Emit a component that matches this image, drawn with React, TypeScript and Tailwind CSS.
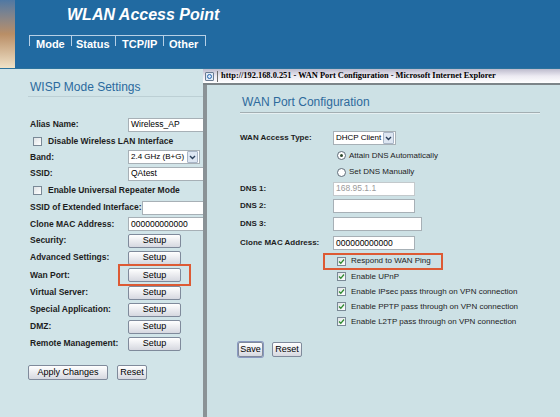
import type { ReactNode } from 'react'

const sans = "font-['Liberation_Sans',Arial,sans-serif]"

function Btn({ children, className = '' }: { children: ReactNode; className?: string }) {
  return (
    <div
      className={`flex h-[14px] items-center justify-center rounded-[2px] border border-[#7f8a9b] bg-gradient-to-b from-white to-[#d6d8e0] text-[9px] leading-none text-black ${className}`}
    >
      {children}
    </div>
  )
}

function Field({ value = '', className = '', muted = false }: { value?: string; className?: string; muted?: boolean }) {
  return (
    <div
      className={`flex h-[14px] shrink-0 items-center border border-[#a7b0b6] bg-white px-[2px] text-[8.5px] leading-none ${muted ? 'text-[#9a9a9a]' : 'text-black'} ${className}`}
    >
      {value}
    </div>
  )
}

function Check({ checked = false }: { checked?: boolean }) {
  return (
    <div className="flex h-[9px] w-[9px] shrink-0 items-center justify-center border border-[#7a8996] bg-gradient-to-br from-[#dfe3e6] to-white">
      {checked && (
        <svg width="7" height="7" viewBox="0 0 7 7">
          <path d="M1 3.5 L2.8 5.3 L6 1.5" fill="none" stroke="#2d8a2d" strokeWidth="1.3" />
        </svg>
      )}
    </div>
  )
}

function Radio({ on = false }: { on?: boolean }) {
  return (
    <div className="flex h-[9px] w-[9px] shrink-0 items-center justify-center rounded-full border border-[#5d6b78] bg-white">
      {on && <div className="h-[3px] w-[3px] rounded-full bg-[#2e4a2e]" />}
    </div>
  )
}

function Select({ value, className = '' }: { value: string; className?: string }) {
  return (
    <div
      className={`flex h-[14px] shrink-0 items-center justify-between overflow-hidden border border-[#a7b0b6] bg-white pl-[2px] pr-px text-[8px] leading-none whitespace-nowrap text-black ${className}`}
    >
      <span>{value}</span>
      <div className="flex h-[12px] w-[11px] shrink-0 items-center justify-center rounded-[1px] border border-[#a9b6c7] bg-[#dde6f2]">
        <svg width="7" height="5" viewBox="0 0 7 5">
          <path d="M1 1 L3.5 3.5 L6 1" fill="none" stroke="#2b3f5a" strokeWidth="1.4" />
        </svg>
      </div>
    </div>
  )
}

function LRow({ label, h, children, lw = 'w-[98px]' }: { label: string; h: string; children?: ReactNode; lw?: string }) {
  return (
    <div className={`flex items-center ${h}`}>
      <div className={`${lw} shrink-0 text-[8.5px] font-bold text-[#1d1d1d]`}>{label}</div>
      {children}
    </div>
  )
}

function LCheck({ label, h }: { label: string; h: string }) {
  return (
    <div className={`flex items-center gap-[6px] pl-[3px] ${h}`}>
      <Check />
      <span className="text-[8.5px] font-bold text-[#1d1d1d]">{label}</span>
    </div>
  )
}

function RRow({ label = '', h, children }: { label?: string; h: string; children?: ReactNode }) {
  return (
    <div className={`flex items-center ${h}`}>
      <div className="w-[93px] shrink-0 text-[8px] font-bold text-[#1d1d1d]">{label}</div>
      {children}
    </div>
  )
}

function RCheck({ label, h }: { label: string; h: string }) {
  return (
    <RRow h={h}>
      <div className="flex items-center gap-[5px] pl-[4px]">
        <Check checked />
        <span className="text-[8px] text-[#1d1d1d]">{label}</span>
      </div>
    </RRow>
  )
}

export default function App() {
  return (
    <div className={`flex h-[417px] w-[560px] flex-col overflow-hidden bg-[#cfe2e6] ${sans}`}>
      {/* Header */}
      <header className="flex h-[69px] shrink-0 border-b border-[#2c739d] bg-[#216aa1]">
        <div className="h-full w-[15px] shrink-0 bg-gradient-to-b from-[#4f78a3] via-[#b98e66] to-[#efe2c8]" />
        <div className="flex flex-col">
          <div className="ml-[52px] pt-[5px] text-[16px] font-bold italic leading-[20px] text-white">WLAN Access Point</div>
          <div className="ml-[14px] mt-[10px] flex w-[177px] border-t border-[#b7d0e6]">
            {[
              ['Mode', 'w-[41px] pl-[6px]'],
              ['Status', 'w-[43px] pl-[4px]'],
              ['TCP/IP', 'w-[47px] pl-[6px]'],
              ['Other', 'w-[41px] pl-[5px]'],
            ].map(([t, c]) => (
              <div key={t} className="flex">
                <div className="h-[10px] w-px bg-[#b7d0e6]" />
                <div className={`${c} pt-[2px] text-[11px] font-bold leading-[13px] text-white`}>{t}</div>
              </div>
            ))}
            <div className="h-[10px] w-px bg-[#b7d0e6]" />
          </div>
        </div>
      </header>

      <div className="flex flex-1">
        {/* Left panel */}
        <div className="w-[203px] shrink-0 overflow-hidden bg-[#d1e4e8] pl-[30px] pt-[10px]">
          <div className="text-[12px] leading-[16px] text-[#2b6a9e]">WISP Mode Settings</div>
          <div className="-ml-[2px] mt-[1px] h-px w-[200px] bg-[#bccfd4]" />
          <div className="mt-[19px] flex flex-col">
            <LRow label="Alias Name:" h="h-[17px]">
              <Field value="Wireless_AP" className="w-[90px]" />
            </LRow>
            <LCheck label="Disable Wireless LAN Interface" h="h-[16px]" />
            <LRow label="Band:" h="h-[16px]">
              <Select value="2.4 GHz (B+G)" className="w-[72px]" />
            </LRow>
            <LRow label="SSID:" h="h-[17px]">
              <Field value="QAtest" className="w-[90px]" />
            </LRow>
            <LCheck label="Enable Universal Repeater Mode" h="h-[17px]" />
            <LRow label="SSID of Extended Interface:" h="h-[17px]" lw="w-[112px]">
              <Field className="w-[80px]" />
            </LRow>
            <LRow label="Clone MAC Address:" h="h-[16px]">
              <Field value="000000000000" className="w-[90px]" />
            </LRow>
            <LRow label="Security:" h="h-[17px]">
              <Btn className="w-[53px]">Setup</Btn>
            </LRow>
            <LRow label="Advanced Settings:" h="h-[17px]">
              <Btn className="w-[53px]">Setup</Btn>
            </LRow>
            <LRow label="Wan Port:" h="h-[18px]">
              <div className="relative">
                <Btn className="w-[53px]">Setup</Btn>
                <div className="absolute -bottom-[4px] -left-[10px] -right-[10px] -top-[4px] border-2 border-[#dd5a34]" />
              </div>
            </LRow>
            <LRow label="Virtual Server:" h="h-[17px]">
              <Btn className="w-[53px]">Setup</Btn>
            </LRow>
            <LRow label="Special Application:" h="h-[17px]">
              <Btn className="w-[53px]">Setup</Btn>
            </LRow>
            <LRow label="DMZ:" h="h-[17px]">
              <Btn className="w-[53px]">Setup</Btn>
            </LRow>
            <LRow label="Remote Management:" h="h-[17px]">
              <Btn className="w-[53px]">Setup</Btn>
            </LRow>
          </div>
          <div className="-ml-[2px] mt-[13px] flex gap-[9px]">
            <Btn className="h-[15px] w-[80px]">Apply Changes</Btn>
            <Btn className="h-[15px] w-[30px]">Reset</Btn>
          </div>
        </div>

        {/* Popup window */}
        <div className="flex flex-1 flex-col">
          <div className="flex h-[14px] shrink-0 items-center gap-[3px] bg-gradient-to-b from-[#bdbbcd] via-[#eceaf2] to-white pl-[2px]">
            <div className="flex h-[9px] w-[9px] items-center justify-center rounded-[1px] border border-[#6b7c91] bg-[#dfe9f5]">
              <div className="h-[5px] w-[5px] rounded-full border border-[#2867b0]" />
            </div>
            <div className="h-[11px] w-px bg-[#6d6d6d]" />
            <span className="whitespace-nowrap font-['Liberation_Serif',serif] text-[8.4px] font-bold leading-none text-black">
              http://192.168.0.251 - WAN Port Configuration - Microsoft Internet Explorer
            </span>
          </div>
          <div className="h-[2px] shrink-0 bg-[#7c8488]" />
          <div className="flex-1 border-l-4 border-[#8a9296] bg-[#cde1e5] pl-[33px] pt-[9px]">
            <div className="pl-[2px] text-[12px] leading-[16px] text-[#2d6a9c]">WAN Port Configuration</div>
            <div className="mt-[2px] h-px w-[300px] bg-[#a3aeb2]" />
            <div className="h-px w-[300px] bg-[#e6f0f2]" />
            <div className="mt-[15px] flex flex-col">
              <RRow label="WAN Access Type:" h="h-[18px]">
                <Select value="DHCP Client" className="w-[63px]" />
              </RRow>
              <RRow h="h-[17px]">
                <div className="flex items-center gap-[3px] pl-[4px] text-[8px] text-[#1d1d1d]">
                  <Radio on />
                  Attain DNS Automatically
                </div>
              </RRow>
              <RRow h="h-[16px]">
                <div className="flex items-center gap-[3px] pl-[4px] text-[8px] text-[#1d1d1d]">
                  <Radio />
                  Set DNS Manually
                </div>
              </RRow>
              <RRow label="DNS 1:" h="h-[17px]">
                <Field value="168.95.1.1" muted className="w-[82px] border-[#c3c9cc]" />
              </RRow>
              <RRow label="DNS 2:" h="h-[17px]">
                <Field className="w-[82px]" />
              </RRow>
              <RRow label="DNS 3:" h="h-[19px]">
                <Field className="w-[89px]" />
              </RRow>
              <RRow label="Clone MAC Address:" h="h-[20px]">
                <Field value="000000000000" className="w-[82px]" />
              </RRow>
              <div className="flex h-[16px] items-center">
                <div className="w-[83px] shrink-0" />
                <div className="flex h-[17px] w-[120px] items-center gap-[5px] border-2 border-[#dd5a34] pl-[12px]">
                  <Check checked />
                  <span className="text-[8px] text-[#1d1d1d]">Respond to WAN Ping</span>
                </div>
              </div>
              <RCheck label="Enable UPnP" h="h-[15px]" />
              <RCheck label="Enable IPsec pass through on VPN connection" h="h-[15px]" />
              <RCheck label="Enable PPTP pass through on VPN connection" h="h-[15px]" />
              <RCheck label="Enable L2TP pass through on VPN connection" h="h-[15px]" />
            </div>
            <div className="-ml-[2px] mt-[13px] flex gap-[9px]">
              <Btn className="h-[15px] w-[25px] border-[#2f3f78] ring-1 ring-[#8a98c0]">Save</Btn>
              <Btn className="h-[15px] w-[30px]">Reset</Btn>
            </div>
          </div>
        </div>
      </div>
    </div>
  )
}
